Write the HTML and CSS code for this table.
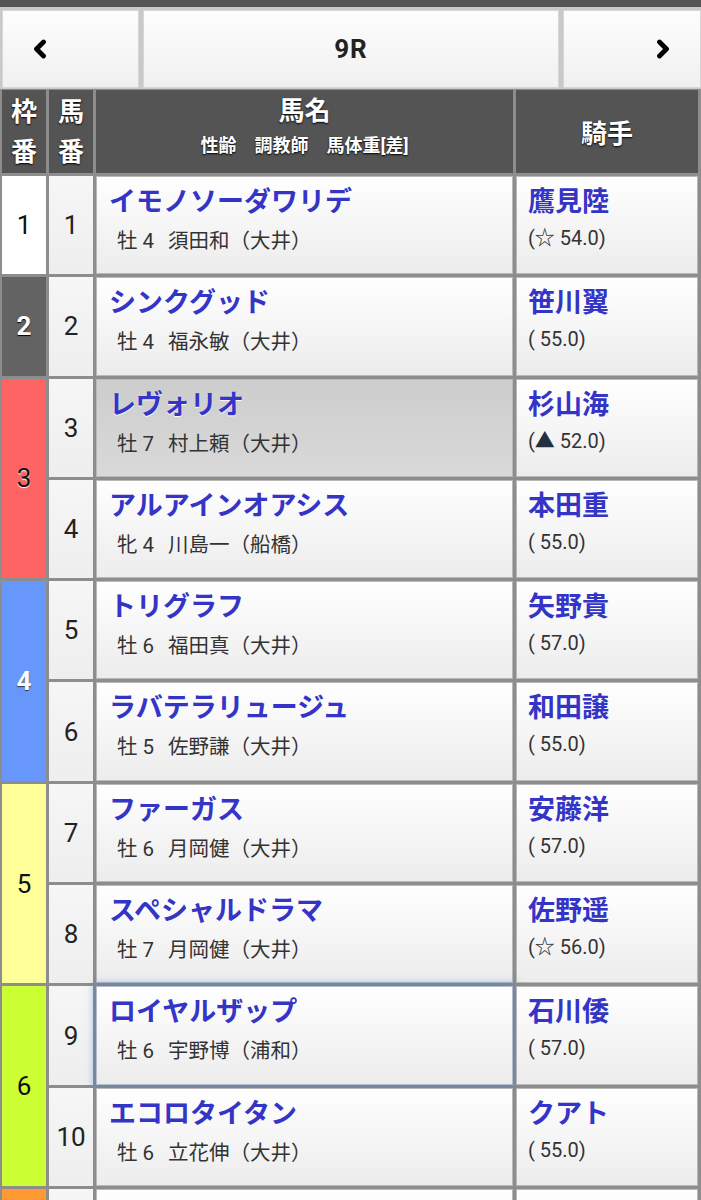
FILE: index.html
```html
<!DOCTYPE html>
<html lang="ja">
  <head>
    <meta charset="utf-8">
    <title>9R 出馬表</title>
    <link rel="stylesheet" href="styles.css">
  </head>
  <body>
    <div class="topbar"></div>
    <nav class="race-nav">
      <button class="nav-btn prev" aria-label="前のレース">
        <svg viewBox="0 0 14 20"><path d="M10.5 3 L3.5 10 L10.5 17" /></svg>
      </button>
      <button class="nav-btn current">9R</button>
      <button class="nav-btn next" aria-label="次のレース">
        <svg viewBox="0 0 14 20"><path d="M3.5 3 L10.5 10 L3.5 17" /></svg>
      </button>
    </nav>

    <table class="entries">
      <colgroup>
        <col class="c-waku">
        <col class="c-uma">
        <col class="c-name">
        <col class="c-jockey">
      </colgroup>
      <thead>
        <tr>
          <th class="h-waku">枠<br>番</th>
          <th class="h-waku">馬<br>番</th>
          <th class="h-name">
            <div class="h-main">馬名</div>
            <div class="h-sub">性齢　調教師　馬体重[差]</div>
          </th>
          <th class="h-jockey">騎手</th>
        </tr>
      </thead>
      <tbody>
        <tr>
          <td class="waku w1">1</td>
          <td class="uma">1</td>
          <td class="horse">
            <div class="hname">イモノソーダワリデ</div>
            <div class="hinfo">牡 4<span class="trainer">須田和（大井）</span></div>
          </td>
          <td class="jockey">
            <div class="jname">鷹見陸</div>
            <div class="kg">(☆ 54.0)</div>
          </td>
        </tr>
        <tr>
          <td class="waku w2">2</td>
          <td class="uma">2</td>
          <td class="horse">
            <div class="hname">シンクグッド</div>
            <div class="hinfo">牡 4<span class="trainer">福永敏（大井）</span></div>
          </td>
          <td class="jockey">
            <div class="jname">笹川翼</div>
            <div class="kg">( 55.0)</div>
          </td>
        </tr>
        <tr>
          <td class="waku w3" rowspan="2">3</td>
          <td class="uma">3</td>
          <td class="horse active">
            <div class="hname">レヴォリオ</div>
            <div class="hinfo">牡 7<span class="trainer">村上頼（大井）</span></div>
          </td>
          <td class="jockey">
            <div class="jname">杉山海</div>
            <div class="kg">(<span class="tri">▲</span> 52.0)</div>
          </td>
        </tr>
        <tr>
          <td class="uma">4</td>
          <td class="horse">
            <div class="hname">アルアインオアシス</div>
            <div class="hinfo">牝 4<span class="trainer">川島一（船橋）</span></div>
          </td>
          <td class="jockey">
            <div class="jname">本田重</div>
            <div class="kg">( 55.0)</div>
          </td>
        </tr>
        <tr>
          <td class="waku w4" rowspan="2">4</td>
          <td class="uma">5</td>
          <td class="horse">
            <div class="hname">トリグラフ</div>
            <div class="hinfo">牡 6<span class="trainer">福田真（大井）</span></div>
          </td>
          <td class="jockey">
            <div class="jname">矢野貴</div>
            <div class="kg">( 57.0)</div>
          </td>
        </tr>
        <tr>
          <td class="uma">6</td>
          <td class="horse">
            <div class="hname">ラバテラリュージュ</div>
            <div class="hinfo">牡 5<span class="trainer">佐野謙（大井）</span></div>
          </td>
          <td class="jockey">
            <div class="jname">和田譲</div>
            <div class="kg">( 55.0)</div>
          </td>
        </tr>
        <tr>
          <td class="waku w5" rowspan="2">5</td>
          <td class="uma">7</td>
          <td class="horse">
            <div class="hname">ファーガス</div>
            <div class="hinfo">牡 6<span class="trainer">月岡健（大井）</span></div>
          </td>
          <td class="jockey">
            <div class="jname">安藤洋</div>
            <div class="kg">( 57.0)</div>
          </td>
        </tr>
        <tr>
          <td class="uma">8</td>
          <td class="horse">
            <div class="hname">スペシャルドラマ</div>
            <div class="hinfo">牡 7<span class="trainer">月岡健（大井）</span></div>
          </td>
          <td class="jockey">
            <div class="jname">佐野遥</div>
            <div class="kg">(☆ 56.0)</div>
          </td>
        </tr>
        <tr>
          <td class="waku w6" rowspan="2">6</td>
          <td class="uma">9</td>
          <td class="horse focused">
            <div class="hname">ロイヤルザップ</div>
            <div class="hinfo">牡 6<span class="trainer">宇野博（浦和）</span></div>
          </td>
          <td class="jockey">
            <div class="jname">石川倭</div>
            <div class="kg">( 57.0)</div>
          </td>
        </tr>
        <tr>
          <td class="uma">10</td>
          <td class="horse">
            <div class="hname">エコロタイタン</div>
            <div class="hinfo">牡 6<span class="trainer">立花伸（大井）</span></div>
          </td>
          <td class="jockey">
            <div class="jname">クアト</div>
            <div class="kg">( 55.0)</div>
          </td>
        </tr>
        <tr>
          <td class="waku w7"></td>
          <td class="uma"></td>
          <td class="horse"></td>
          <td class="jockey"></td>
        </tr>
      </tbody>
    </table>
  </body>
</html>
```

FILE: styles.css
```css
* {
  box-sizing: border-box;
}

html,
body {
  margin: 0;
  padding: 0;
}

body {
  width: 701px;
  overflow: hidden;
  background-color: #8d8d8d;
  font-family: "Roboto", "Noto Sans CJK JP", sans-serif;
  color: #333;
}

.topbar {
  height: 7px;
  background-color: #555;
}

/* race switcher */
.race-nav {
  display: flex;
  gap: 4px;
  padding: 3px 0 1px 2px;
  background-color: #c9c9c9;
}

.nav-btn {
  height: 78px;
  border: 1px solid #d6d6d6;
  border-radius: 0;
  background: linear-gradient(#fdfdfd, #f0f0f0);
  font-family: inherit;
  color: #222;
  padding: 0;
}

.prev {
  width: 137px;
}

.next {
  width: 138px;
}

.current {
  flex: 1;
  font-size: 26px;
  font-weight: bold;
  letter-spacing: 1px;
}

.nav-btn svg {
  width: 14px;
  height: 20px;
  fill: none;
  stroke: #000;
  stroke-width: 4.8;
  stroke-linecap: round;
  stroke-linejoin: round;
}

.prev svg {
  margin-right: 62px;
  margin-top: 3px;
}

.next svg {
  margin-left: 62px;
  margin-top: 3px;
}

/* entry table */
.entries {
  table-layout: fixed;
  width: 701px;
  border-collapse: separate;
  border-spacing: 3px;
  margin-top: -2px;
  margin-left: -1px;
}

.c-waku { width: 44px; }
.c-uma { width: 44px; }
.c-name { width: 417px; }
.c-jockey { width: 182px; }

th {
  background-color: #545454;
  color: #fff;
  font-weight: bold;
  text-shadow: 0 1px 2px #000;
  padding: 0;
  height: 83px;
}

.h-waku {
  font-size: 26px;
  line-height: 40px;
}

.h-name {
  vertical-align: top;
  padding-top: 3px;
}

.h-main {
  font-size: 26px;
  line-height: 36px;
}

.h-sub {
  font-size: 18px;
  line-height: 24px;
  margin-top: 5px;
}

.h-jockey {
  font-size: 26px;
}

td {
  padding: 0;
  height: 98.3px;
}

.waku {
  text-align: center;
  font-size: 26px;
  color: #111;
}

.w1 { background-color: #fff; }
.w2 { background-color: #636363; color: #fff; font-weight: bold; text-shadow: 0 1px 1px #000; }
.w3 { background-color: #ff6464; text-shadow: 0 1px 1px #fff; }
.w4 { background-color: #6797fb; color: #fff; font-weight: bold; text-shadow: 0 1px 1px #335; }
.w5 { background-color: #ffff9a; }
.w6 { background-color: #ccff33; }
.w7 { background-color: #ff9a33; }

.uma {
  text-align: center;
  font-size: 26px;
  color: #222;
  background: linear-gradient(#f6f6f6, #eeeeee);
}

.horse,
.jockey {
  vertical-align: top;
  background: linear-gradient(#ffffff, #ececec);
  box-shadow: inset 0 0 0 1px #b8b8b8;
}

.horse {
  padding: 9px 0 0 13px;
}

.horse.active {
  background: linear-gradient(#cdcdcd, #d9d9d9);
}

.horse.active .hname {
  text-shadow: 0 1px 1px #fff;
}

.horse.focused {
  box-shadow: inset 0 0 0 1px #b4bccb, 0 0 8px 2px rgba(70, 125, 205, 0.55);
}

.hname,
.jname {
  color: #3434c6;
  font-size: 27px;
  font-weight: bold;
  line-height: 34px;
  white-space: nowrap;
}

.hinfo {
  font-size: 20.5px;
  line-height: 30px;
  margin-top: 7px;
  padding-left: 8px;
  color: #333;
}

.trainer {
  margin-left: 14px;
}

.jockey {
  padding: 9px 0 0 12px;
}

.kg {
  font-size: 20px;
  line-height: 28px;
  margin-top: 5px;
  color: #333;
}

.tri {
  color: #223040;
}
```
